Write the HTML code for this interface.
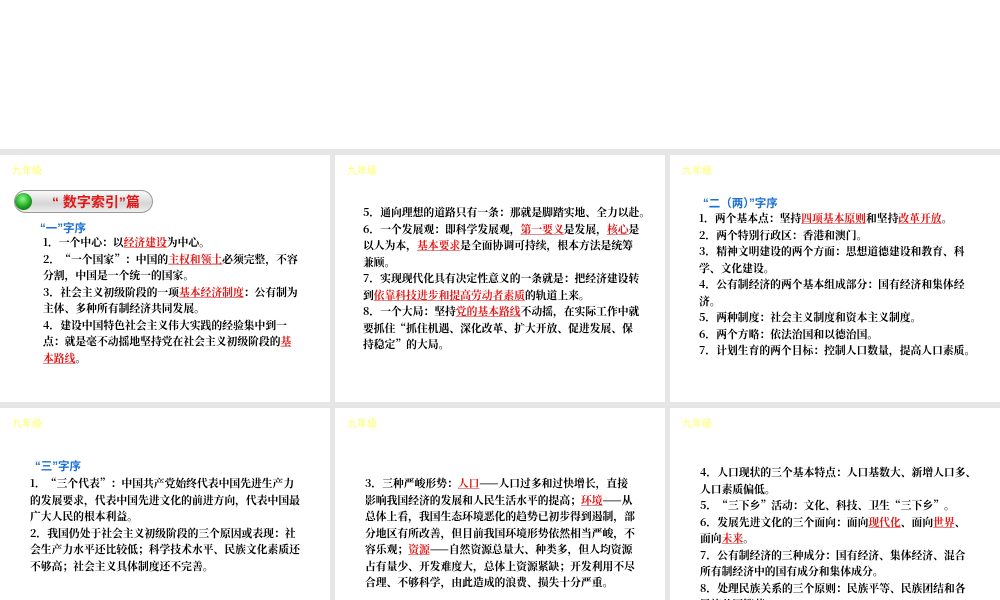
<!DOCTYPE html>
<html><head><meta charset="utf-8"><style>
*{margin:0;padding:0;box-sizing:border-box}
body{width:1000px;height:600px;background:#fff;position:relative;overflow:hidden;font-family:"Liberation Sans","Noto Sans CJK SC",sans-serif}
.g{position:absolute;left:0;top:149px;width:1000px;height:451px;background:#e6e6e6}
.p{position:absolute;background:#fff;overflow:hidden}
.y{position:absolute;color:#ffff66;font-size:10px}
.t{position:absolute;font-size:10.8px;line-height:16.5px;color:#000;font-family:"Noto Serif CJK SC","Noto Sans CJK SC",serif;white-space:nowrap;font-weight:bold}
.h{position:absolute;color:#1a6fd3;font-size:11.5px;font-weight:bold}
.r{color:#e01818;text-decoration:underline;text-decoration-color:#e88;font-weight:bold}
</style></head><body>
<div class="g"></div>
<div class="p" style="left:0;top:155px;width:330px;height:247px">
<div class="y" style="left:12px;top:7px">九年级</div>
<div style="position:absolute;left:14px;top:35px;width:139px;height:23px;border-radius:12px;border:1px solid #999;background:linear-gradient(#fafafa,#d6d6d6 60%,#eee)"></div>
<div style="position:absolute;left:15px;top:38px;width:17px;height:17px;border-radius:50%;background:radial-gradient(circle at 45% 35%,#8f8,#1a9a1a 60%,#0a5a0a)"></div>
<div style="position:absolute;left:52px;top:37px;color:#e01818;font-weight:bold;font-size:14px">“ 数字索引”篇</div>
<div class="h" style="left:40px;top:65px">“一”字序</div>
<div class="t" style="left:43px;top:80px">1．一个中心：以<span class="r">经济建设</span>为中心。<br>2．“一个国家”：中国的<span class="r">主权和领土</span>必须完整，不容<br>分割，中国是一个统一的国家。<br>3．社会主义初级阶段的一项<span class="r">基本经济制度</span>：公有制为<br>主体、多种所有制经济共同发展。<br>4．建设中国特色社会主义伟大实践的经验集中到一<br>点：就是毫不动摇地坚持党在社会主义初级阶段的<span class="r">基</span><br><span class="r">本路线</span>。</div>
</div>
<div class="p" style="left:335px;top:155px;width:330px;height:247px">
<div class="y" style="left:12px;top:7px">九年级</div>
<div class="t" style="left:28px;top:50px">5．通向理想的道路只有一条：那就是脚踏实地、全力以赴。<br>6．一个发展观：即科学发展观，<span class="r">第一要义</span>是发展，<span class="r">核心</span>是<br>以人为本，<span class="r">基本要求</span>是全面协调可持续，根本方法是统筹<br>兼顾。<br>7．实现现代化具有决定性意义的一条就是：把经济建设转<br>到<span class="r">依靠科技进步和提高劳动者素质</span>的轨道上来。<br>8．一个大局：坚持<span class="r">党的基本路线</span>不动摇，在实际工作中就<br>要抓住“抓住机遇、深化改革、扩大开放、促进发展、保<br>持稳定”的大局。</div>
</div>
<div class="p" style="left:670px;top:155px;width:330px;height:247px">
<div class="y" style="left:12px;top:7px">九年级</div>
<div class="h" style="left:33px;top:40px">“二（两）”字序</div>
<div class="t" style="left:29px;top:56px">1．两个基本点：坚持<span class="r">四项基本原则</span>和坚持<span class="r">改革开放</span>。<br>2．两个特别行政区：香港和澳门。<br>3．精神文明建设的两个方面：思想道德建设和教育、科<br>学、文化建设。<br>4．公有制经济的两个基本组成部分：国有经济和集体经<br>济。<br>5．两种制度：社会主义制度和资本主义制度。<br>6．两个方略：依法治国和以德治国。<br>7．计划生育的两个目标：控制人口数量，提高人口素质。</div>
</div>
<div class="p" style="left:0;top:408px;width:330px;height:192px">
<div class="y" style="left:12px;top:7px">九年级</div>
<div class="h" style="left:35px;top:50px">“三”字序</div>
<div class="t" style="left:30px;top:68px">1．“三个代表”：中国共产党始终代表中国先进生产力<br>的发展要求，代表中国先进文化的前进方向，代表中国最<br>广大人民的根本利益。<br>2．我国仍处于社会主义初级阶段的三个原因或表现：社<br>会生产力水平还比较低；科学技术水平、民族文化素质还<br>不够高；社会主义具体制度还不完善。</div>
</div>
<div class="p" style="left:335px;top:408px;width:330px;height:192px">
<div class="y" style="left:12px;top:7px">九年级</div>
<div class="t" style="left:30px;top:68px">3．三种严峻形势：<span class="r">人口</span>——人口过多和过快增长，直接<br>影响我国经济的发展和人民生活水平的提高；<span class="r">环境</span>——从<br>总体上看，我国生态环境恶化的趋势已初步得到遏制，部<br>分地区有所改善，但目前我国环境形势依然相当严峻，不<br>容乐观；<span class="r">资源</span>——自然资源总量大、种类多，但人均资源<br>占有量少、开发难度大，总体上资源紧缺；开发利用不尽<br>合理、不够科学，由此造成的浪费、损失十分严重。</div>
</div>
<div class="p" style="left:670px;top:408px;width:330px;height:192px">
<div class="y" style="left:12px;top:7px">九年级</div>
<div class="t" style="left:30px;top:57px">4．人口现状的三个基本特点：人口基数大、新增人口多、<br>人口素质偏低。<br>5．“三下乡”活动：文化、科技、卫生“三下乡”。<br>6．发展先进文化的三个面向：面向<span class="r">现代化</span>、面向<span class="r">世界</span>、<br>面向<span class="r">未来</span>。<br>7．公有制经济的三种成分：国有经济、集体经济、混合<br>所有制经济中的国有成分和集体成分。<br>8．处理民族关系的三个原则：民族平等、民族团结和各<br>民族共同繁荣。</div>
</div>
</body></html>
